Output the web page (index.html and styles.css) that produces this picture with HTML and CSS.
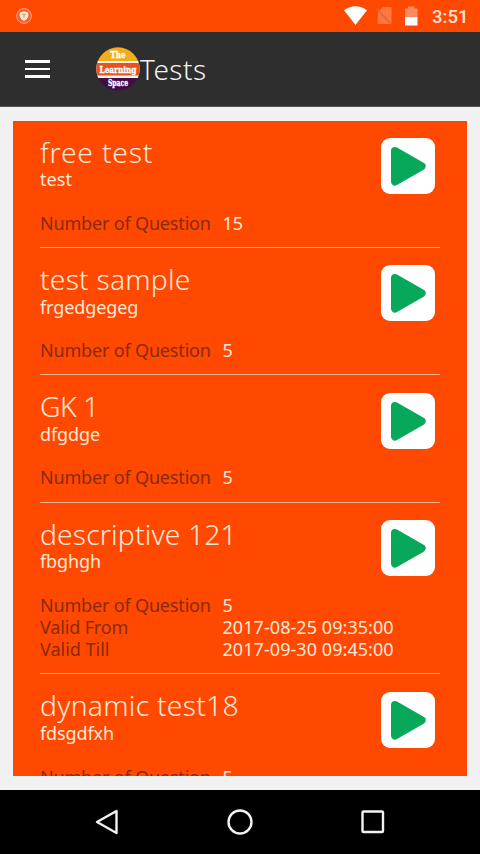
FILE: index.html
```html
<!DOCTYPE html>
<html lang="en">
<head>
<meta charset="utf-8">
<title>Tests</title>
<link rel="stylesheet" href="styles.css">
</head>
<body>
<svg class="defs" width="0" height="0" aria-hidden="true">
  <symbol id="play" viewBox="0 0 54 56">
    <path d="M14 13 L40.600 28.300 L14 43.500 Z" fill="#08a85a" stroke="#08a85a" stroke-width="8" stroke-linejoin="round"/>
  </symbol>
</svg>
<div class="status">
  <svg class="shield" width="16" height="16" viewBox="0 0 16 16"><circle cx="8" cy="8" r="7.4" fill="#f4602c" stroke="#ffa583" stroke-width="1"/><path d="M8 3.2 L12.3 4.6 V8 Q12 11.2 8 13 Q4 11.2 3.7 8 V4.6 Z" fill="#ffe5d6"/><path d="M6.3 6.2 H9.7 M8 6.2 V9.5" stroke="#e08a68" stroke-width="1.1"/></svg>
  <svg class="signals" width="80" height="22" viewBox="0 0 80 22"><path d="M1 5.3 Q12.500 -2.800 24 5.300 L12.500 20 Z" fill="#fff"/><path d="M35 7 L40 2 H48.500 V19 H34.500 Z" fill="#ff7640"/><path d="M33 3.500 L49.500 20" stroke="#d9683e" stroke-width="1.400"/><path d="M62 3.500 H65 V1.500 H71.500 V3.500 H74.500 V12 H62 Z" fill="#ff8a61"/><path d="M62 12 H74.500 V20.500 H62 Z" fill="#fff"/></svg>
  <span class="clock">3:51</span>
</div>
<header class="bar">
  <div class="menu"><i></i><i></i><i></i></div>
  <svg class="logo" width="44" height="44" viewBox="0 0 44 44">
    <clipPath id="disc"><circle cx="22" cy="22" r="21.700"/></clipPath>
    <g clip-path="url(#disc)"><rect width="44" height="15" fill="#f3ac1b"/><rect y="14" width="44" height="17" fill="#fff2e8"/><rect y="16" width="44" height="12.500" fill="#ea5222"/><rect y="31" width="44" height="13" fill="#410c47"/></g>
    <g class="logo-text"><text x="22" y="11" textLength="15" lengthAdjust="spacingAndGlyphs">The</text><text x="22" y="25.500" textLength="37" lengthAdjust="spacingAndGlyphs">Learning</text><text x="22" y="38.500" textLength="20" lengthAdjust="spacingAndGlyphs">Space</text></g>
  </svg>
  <h1>Tests</h1>
</header>
<main>
  <div class="card">
    <section class="item">
      <div class="head"><div><h2 class="t1">free test</h2><p class="s1">test</p></div><svg class="play"><use href="#play"/></svg></div>
      <dl><dt class="num">Number of Question</dt><dd>15</dd></dl>
    </section>
    <section class="item">
      <div class="head"><div><h2 class="t2">test sample</h2><p>frgedgegeg</p></div><svg class="play"><use href="#play"/></svg></div>
      <dl><dt class="num">Number of Question</dt><dd>5</dd></dl>
    </section>
    <section class="item">
      <div class="head"><div><h2 class="t3">GK 1</h2><p>dfgdge</p></div><svg class="play"><use href="#play"/></svg></div>
      <dl><dt class="num">Number of Question</dt><dd>5</dd></dl>
    </section>
    <section class="item">
      <div class="head"><div><h2 class="t4">descriptive 121</h2><p>fbghgh</p></div><svg class="play"><use href="#play"/></svg></div>
      <dl><dt class="num">Number of Question</dt><dd>5</dd><dt class="from">Valid From</dt><dd class="date">2017-08-25 09:35:00</dd><dt>Valid Till</dt><dd class="date">2017-09-30 09:45:00</dd></dl>
    </section>
    <section class="item">
      <div class="head"><div><h2 class="t5">dynamic test18</h2><p>fdsgdfxh</p></div><svg class="play"><use href="#play"/></svg></div>
      <dl><dt class="num">Number of Question</dt><dd>5</dd></dl>
    </section>
  </div>
</main>
<nav>
  <svg width="24" height="26" viewBox="0 0 24 26"><path d="M2 13 L21.500 2 V24 Z"/></svg>
  <svg width="26" height="26" viewBox="0 0 26 26"><circle cx="13" cy="13" r="11.500"/></svg>
  <svg width="24" height="24" viewBox="0 0 24 24"><rect x="1.500" y="1.500" width="20.500" height="20.500" rx="1"/></svg>
</nav>
</body>
</html>
```
FILE: styles.css
```css
* { box-sizing: border-box; }
body, h1, h2, p, dl, dd { margin: 0; }
body { width: 480px; height: 854px; overflow: hidden; display: flex; flex-direction: column; background: #f1f1f1; color: #ffe9d9; font-family: "Noto Sans", "Open Sans", sans-serif; }
.defs { position: absolute; }
.status { height: 32px; flex: none; background: #ff4800; display: flex; align-items: center; padding: 0 11px 0 16px; }
.signals { margin-left: auto; margin-right: 5px; }
.clock { width: 36px; font: 500 18.500px/32px Roboto, sans-serif; white-space: nowrap; padding-top: 2px; color: #ffe3d6; }
.signals + .clock { width: 37px; margin-left: 4px; }
.bar { height: 75px; flex: none; background: #2e2e2e; border-bottom: 1px solid #555; display: flex; align-items: center; padding-left: 25px; }
.menu { width: 71px; display: grid; gap: 4.500px; }
.menu i { width: 25px; height: 2.700px; background: #fff; }
.logo-text { font: 900 9px "DejaVu Serif", serif; fill: #fff; stroke: #fff; stroke-width: .35px; text-anchor: middle; }
h1 { font-size: 28px; font-weight: 300; line-height: 40px; letter-spacing: .5px; color: #f2f2f2; }
main { flex: 1; min-height: 0; padding: 14.400px 13px 14px; }
.card { height: 654.600px; background: #ff4800; padding: 0 27px; overflow: hidden; }
.item { padding: 16.500px 0 12.800px; border-bottom: 1px solid #ffae90; margin-bottom: .9px; }
.head { display: flex; justify-content: space-between; height: 73.800px; white-space: nowrap; }
.item dl { margin-bottom: .2px; }
h2 { font-size: 28.300px; font-weight: 300; line-height: 32px; margin: -2.300px 0 .800px; }
.t1 { letter-spacing: .8px; }
.t2 { letter-spacing: .2px; }
.t3 { letter-spacing: -.5px; }
.t4 { letter-spacing: .13px; }
.t5 { letter-spacing: .25px; }
p { font-size: 18px; line-height: 22px; letter-spacing: -.1px; }
.s1 { letter-spacing: .1px; }
.play { width: 54px; height: 56px; background: #fff; border-radius: 9px; margin-right: 5px; flex: none; }
dl { display: grid; grid-template-columns: 182.500px 1fr; grid-auto-rows: 22.200px; font-size: 18px; line-height: 22.200px; white-space: nowrap; }
dt { color: #8b2a08; }
.num { letter-spacing: -.17px; }
.from { letter-spacing: -.15px; }
.date { letter-spacing: .06px; }
nav { height: 64px; flex: none; background: #000; display: grid; grid-template-columns: 133px 133px 133px; justify-content: center; place-items: center; }
nav svg { fill: none; stroke: #f2f2f2; stroke-width: 2.400; stroke-linejoin: round; }
```
